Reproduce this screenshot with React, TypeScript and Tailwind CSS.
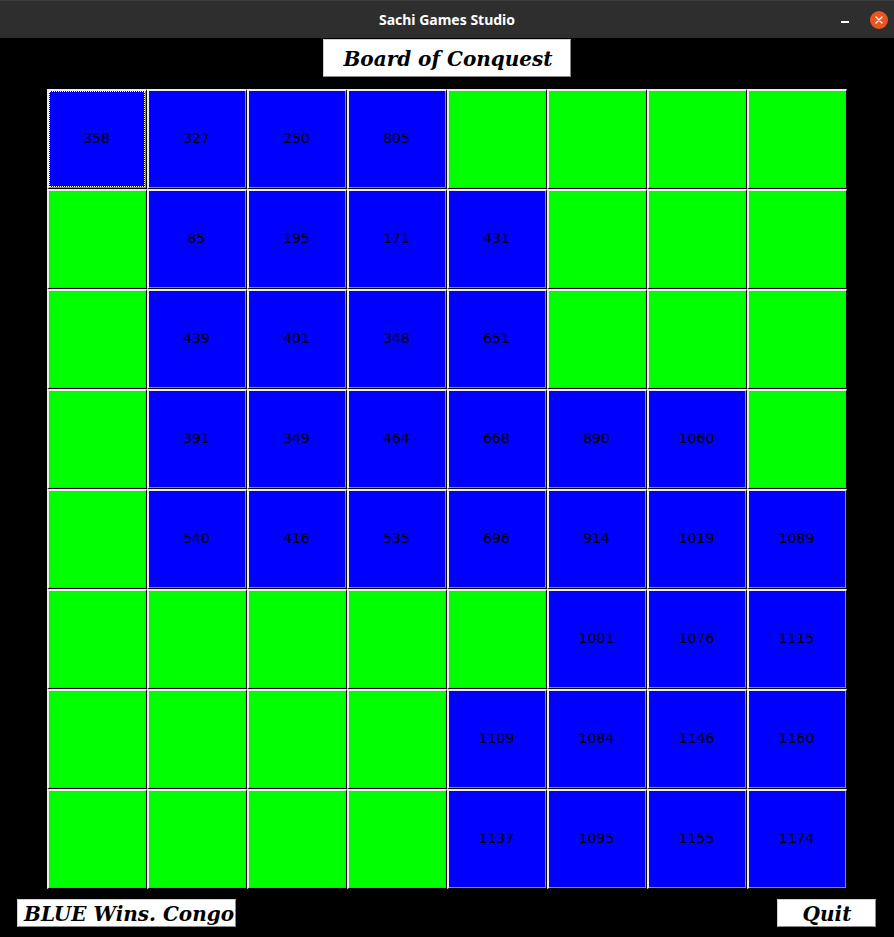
import React from "react";

type Cell = number | null;
const G = null;
const board: Cell[][] = [
  [358, 327, 250, 805, G, G, G, G],
  [G, 85, 195, 171, 431, G, G, G],
  [G, 439, 401, 348, 651, G, G, G],
  [G, 391, 349, 464, 668, 890, 1060, G],
  [G, 540, 416, 535, 696, 914, 1019, 1089],
  [G, G, G, G, G, 1001, 1076, 1115],
  [G, G, G, G, 1109, 1084, 1146, 1160],
  [G, G, G, G, 1137, 1095, 1155, 1174],
];

const serif = { fontFamily: '"DejaVu Serif", "Liberation Serif", serif' };

function Square({ v, focus }: { v: Cell; focus?: boolean }) {
  return (
    <div className="w-[100px] h-[100px] flex border-l-2 border-t-2 border-r border-b border-l-[#ececec] border-t-[#ececec] border-r-black border-b-black">
      <div
        className={`relative flex-1 flex items-center justify-center border-r border-b border-r-[#8e8e8e] border-b-[#8e8e8e] ${
          v === null ? "bg-[#00ff00]" : "bg-[#0000ff]"
        }`}
      >
        {focus && <div className="absolute inset-0 border border-dotted border-white" />}
        {v !== null && (
          <span
            className="text-[14px] text-black leading-none -mt-[2px] -ml-[1px]"
            style={{ fontFamily: '"DejaVu Sans", "Liberation Sans", sans-serif' }}
          >
            {v}
          </span>
        )}
      </div>
    </div>
  );
}

export default function App() {
  return (
    <div className="w-[894px] h-[937px] bg-black flex flex-col overflow-hidden">
      <div className="h-[38px] bg-[#2e2e2e] border-t border-t-[#3c3c3c] flex items-center relative shrink-0">
        <div
          className="flex-1 text-center text-white text-[14px] font-bold"
          style={{ fontFamily: '"Noto Sans", "DejaVu Sans", sans-serif' }}
        >
          Sachi Games Studio
        </div>
        <div className="absolute left-[841px] top-[20px] w-[8px] h-[1.5px] bg-white" />
        <div className="absolute left-[870px] top-[10px] w-[18px] h-[18px] rounded-full bg-[#e95420] flex items-center justify-center">
          <svg width="8" height="8" viewBox="0 0 8 8">
            <path d="M1 1L7 7M7 1L1 7" stroke="white" strokeWidth="1.4" strokeLinecap="round" />
          </svg>
        </div>
      </div>
      <div className="flex justify-center mt-[1px]">
        <div className="w-[248px] h-[38px] bg-white border border-t-[#d0d0d0] border-l-[#d0d0d0] border-r-[#8a8a8a] border-b-[#8a8a8a] flex items-center justify-center">
          <span className="text-[20px] font-bold italic text-black leading-none mt-[2px] ml-[2px]" style={serif}>
            Board of Conquest
          </span>
        </div>
      </div>
      <div className="mt-[12px] ml-[47px] grid grid-cols-8 w-[800px]">
        {board.flatMap((row, r) =>
          row.map((v, c) => <Square key={`${r}-${c}`} v={v} focus={r === 0 && c === 0} />)
        )}
      </div>
      <div className="mt-[10px] flex justify-between pl-[17px] pr-[18px]">
        <div className="w-[219px] h-[28px] bg-white border border-t-[#d0d0d0] border-l-[#d0d0d0] border-r-[#8a8a8a] border-b-[#8a8a8a] overflow-hidden flex items-center pl-[6px] whitespace-nowrap">
          <span className="text-[20px] font-bold italic text-black leading-none mt-[2px]" style={serif}>
            BLUE Wins. Congo
          </span>
        </div>
        <div className="w-[99px] h-[28px] bg-white border border-t-[#d0d0d0] border-l-[#d0d0d0] border-r-[#8a8a8a] border-b-[#8a8a8a] flex items-center justify-center">
          <span className="text-[20px] font-bold italic text-black leading-none mt-[2px] ml-[1px]" style={serif}>
            Quit
          </span>
        </div>
      </div>
    </div>
  );
}
